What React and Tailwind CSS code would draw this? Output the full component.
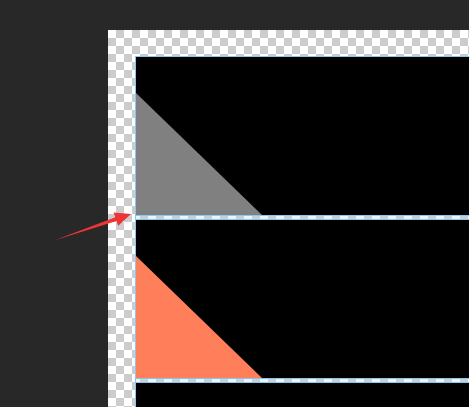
function Row({ color }) {
  return (
    <div className="relative h-[158px] bg-black">
      <svg className="absolute left-0 top-0" width="140" height="158" viewBox="0 0 140 158">
        <polygon points="0,36 0,158 126,158" fill={color} />
      </svg>
    </div>
  );
}

function Gap() {
  return <div className="h-[5px] border-y border-[#8cc6ea] bg-[#b8dff7]/30" />;
}

export default function App() {
  return (
    <div className="relative w-[469px] h-[407px] overflow-hidden bg-[#282828] pl-[108px] pt-[30px] font-['Liberation_Sans',sans-serif]">
      <div className="h-full bg-[repeating-conic-gradient(#cccccc_0%_25%,#ffffff_0%_50%)] bg-[length:16px_16px] pl-[27px] pt-[26px]">
        <div className="border-l border-t border-[#8cc6ea]">
          <Row color="#808080" />
          <Gap />
          <Row color="#ff7f5a" />
          <Gap />
          <div className="h-[40px] bg-black" />
        </div>
      </div>
      <svg className="absolute left-0 top-0" width="469" height="407" viewBox="0 0 469 407">
        <polygon
          points="54,240.5 115.3,217.3 113.6,212.6 131,214 118.2,225.8 116.5,221.1"
          fill="#ee3535"
        />
      </svg>
    </div>
  );
}
